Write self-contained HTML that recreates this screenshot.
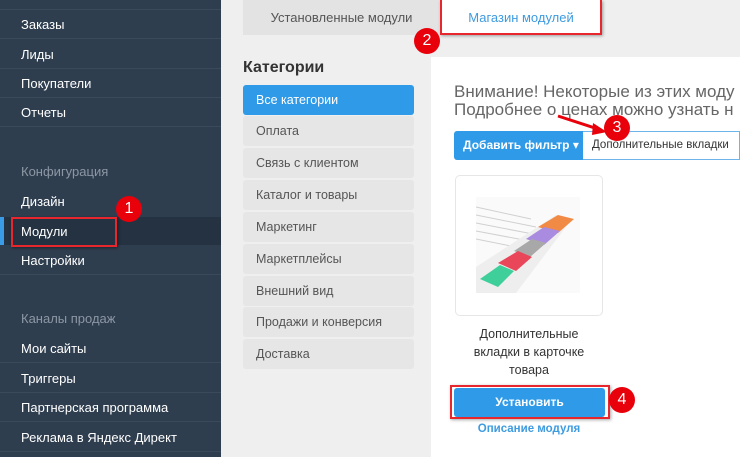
<!DOCTYPE html>
<html><head><meta charset="utf-8"><style>
*{margin:0;padding:0;box-sizing:border-box}
body{width:740px;height:457px;overflow:hidden;background:#efefef;font-family:"Liberation Sans","DejaVu Sans",sans-serif;position:relative}
.sb{position:absolute;left:0;top:0;width:221px;height:457px;background:#2f3e4f}
.sb .it{position:absolute;left:0;width:221px;height:29px;border-bottom:1px solid #3a4a5b;color:#fff;font-size:13px;padding-left:21px;line-height:29px}
.sb .hd{position:absolute;left:21px;color:#8c97a3;font-size:13px}
.abs{position:absolute}
.badge{position:absolute;width:26px;height:26px;border-radius:50%;background:#e8000b;color:#fff;font-size:16px;text-align:center;line-height:26px}
.cat{position:absolute;left:243px;width:171px;height:30px;background:#e6e6e6;border-radius:3px;color:#555;font-size:12.5px;padding-left:13px;line-height:30px}
</style></head><body>
<div class="sb">
<div class="it" style="top:-19px"></div>
<div class="it" style="top:10px">Заказы</div>
<div class="it" style="top:40px">Лиды</div>
<div class="it" style="top:69px">Покупатели</div>
<div class="it" style="top:98px">Отчеты</div>
<div class="hd" style="top:164px">Конфигурация</div>
<div class="it" style="top:187px;border:none">Дизайн</div>
<div class="it" style="top:217px;background:#243241;border-bottom-color:#2f3e4f">Модули</div>
<div class="abs" style="left:0;top:217px;width:4px;height:28px;background:#3a9be6"></div>
<div class="it" style="top:246px">Настройки</div>
<div class="hd" style="top:311px">Каналы продаж</div>
<div class="it" style="top:334px">Мои сайты</div>
<div class="it" style="top:364px">Триггеры</div>
<div class="it" style="top:393px">Партнерская программа</div>
<div class="it" style="top:423px">Реклама в Яндекс Директ</div>
</div>
<div class="abs" style="left:11px;top:217px;width:106px;height:30px;border:2px solid #e8262e;box-shadow:1px 1px 3px rgba(0,0,0,.4)"></div>
<div class="badge" style="left:116px;top:196px">1</div>

<div class="abs" style="left:243px;top:0;width:197px;height:35px;background:#e3e3e3;color:#555;font-size:13px;text-align:center;line-height:36px">Установленные модули</div>
<div class="abs" style="left:440px;top:0;width:162px;height:35px;background:#fff;color:#3d9be0;font-size:13px;text-align:center;line-height:36px;border:2px solid #e8262e;border-top:none;box-shadow:1px 1px 3px rgba(0,0,0,.35)">Магазин модулей</div>
<div class="badge" style="left:414px;top:28px">2</div>

<div class="abs" style="left:243px;top:59px;font-size:16px;font-weight:bold;color:#333">Категории</div>
<div class="cat" style="top:85px;background:#2f9ae8;color:#fff">Все категории</div>
<div class="cat" style="top:116px">Оплата</div>
<div class="cat" style="top:148px">Связь с клиентом</div>
<div class="cat" style="top:180px">Каталог и товары</div>
<div class="cat" style="top:212px">Маркетинг</div>
<div class="cat" style="top:244px">Маркетплейсы</div>
<div class="cat" style="top:276px">Внешний вид</div>
<div class="cat" style="top:307px">Продажи и конверсия</div>
<div class="cat" style="top:339px">Доставка</div>

<div class="abs" style="left:431px;top:57px;width:309px;height:400px;background:#fff"></div>
<div class="abs" style="left:454px;top:83px;font-size:17px;line-height:18px;color:#666;white-space:nowrap">Внимание! Некоторые из этих моду<br>Подробнее о ценах можно узнать н</div>
<div class="abs" style="left:454px;top:131px;width:129px;height:29px;background:#2f9ae8;border-radius:3px 0 0 3px;color:#fff;font-size:12px;font-weight:bold;line-height:29px;padding-left:9px">Добавить фильтр ▾</div>
<div class="abs" style="left:583px;top:131px;width:157px;height:29px;border:1px solid #6cb4ea;border-left:none;color:#333;font-size:11.5px;line-height:27px;padding-left:9px">Дополнительные вкладки</div>
<svg class="abs" style="left:555px;top:110px" width="60" height="30"><line x1="3" y1="6" x2="46" y2="20" stroke="#e8000b" stroke-width="3"/><polygon points="52,22 38,13 37,25" fill="#e8000b"/></svg>
<div class="badge" style="left:604px;top:115px">3</div>

<div class="abs" style="left:455px;top:175px;width:148px;height:141px;border:1px solid #e6e6e6;border-radius:5px"></div>
<svg class="abs" style="left:476px;top:197px" width="104" height="96">
<rect width="104" height="96" fill="#fafafa"/>
<g stroke="#d0d0d0" stroke-width="1"><line x1="0" y1="10" x2="55" y2="22"/><line x1="0" y1="18" x2="60" y2="30"/><line x1="0" y1="26" x2="62" y2="38"/><line x1="0" y1="34" x2="64" y2="46"/><line x1="0" y1="42" x2="60" y2="54"/></g>
<polygon points="0,96 0,70 80,18 96,22 40,96" fill="#eeeeee"/>
<polygon points="62,30 82,18 98,22 82,36" fill="#f08a45"/>
<polygon points="50,42 68,30 84,34 68,48" fill="#a98be0"/>
<polygon points="38,54 56,42 70,46 54,60" fill="#a8a8a8"/>
<polygon points="22,66 42,54 56,60 40,74" fill="#e9465a"/>
<polygon points="4,82 24,68 38,74 22,90" fill="#3fcf9b"/>
</svg>
<div class="abs" style="left:455px;top:325px;width:148px;text-align:center;font-size:12.5px;line-height:18px;color:#333">Дополнительные<br>вкладки в карточке<br>товара</div>
<div class="abs" style="left:454px;top:388px;width:151px;height:29px;background:#2f9ae8;border-radius:3px;color:#fff;font-size:12px;font-weight:bold;text-align:center;line-height:28px">Установить</div>
<div class="abs" style="left:450px;top:385px;width:160px;height:34px;border:2px solid #e8262e;box-shadow:1px 1px 3px rgba(0,0,0,.35)"></div>
<div class="badge" style="left:609px;top:387px">4</div>
<div class="abs" style="left:455px;top:423px;width:148px;text-align:center;font-size:11.5px;font-weight:bold;color:#3d9be0">Описание модуля</div>
</body></html>
